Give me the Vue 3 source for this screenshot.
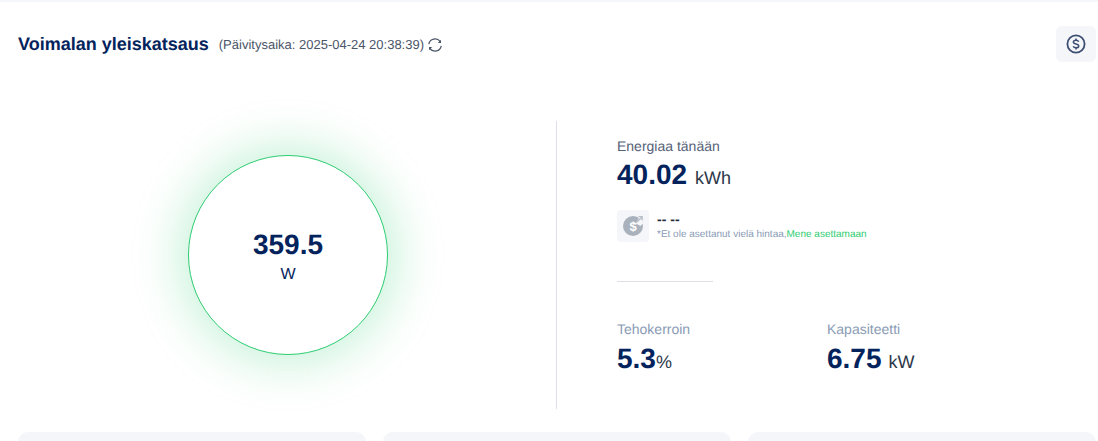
<template>
  <div class="page">
    <header class="head">
      <div class="title-wrap">
        <h1 class="title">Voimalan yleiskatsaus</h1>
        <span class="updated">(Päivitysaika: 2025-04-24 20:38:39)</span>
        <svg class="refresh" width="16" height="16" viewBox="0 0 16 16" fill="none" stroke="#4a5568" stroke-width="1.2">
          <path d="M1.800 7.200A6.300 6.300 0 0 1 13.200 4.600" />
          <path d="M14.200 8.800A6.300 6.300 0 0 1 2.800 11.400" />
          <path d="M14 2.800v3.200h-3.200z" fill="#4a5568" stroke="none" />
          <path d="M2 13.200V10h3.200z" fill="#4a5568" stroke="none" />
        </svg>
      </div>
      <button class="coin-btn" type="button" aria-label="Hinta">
        <svg width="20" height="20" viewBox="0 0 20 20" fill="none" stroke="#3d4f70" stroke-width="1.8">
          <circle cx="10" cy="10" r="8.600" />
          <path d="M12.700 7.700c-.4-1-1.400-1.500-2.700-1.500-1.500 0-2.600.7-2.600 1.900 0 1.200 1.100 1.600 2.600 1.900 1.500.3 2.700.7 2.700 1.900 0 1.200-1.200 1.900-2.700 1.900-1.300 0-2.400-.5-2.800-1.500" stroke-width="1.500" />
          <path d="M10 4.400v1.800M10 13.800v1.800" stroke-width="1.500" />
        </svg>
      </button>
    </header>

    <section class="body">
      <div class="gauge-col">
        <div class="gauge">
          <div class="gauge-value">359.5</div>
          <div class="gauge-unit">W</div>
        </div>
      </div>
      <div class="info-col">
        <div class="label">Energiaa tänään</div>
        <div class="metric"><b>40.02</b><span class="unit spaced">kWh</span></div>
        <div class="price">
          <div class="price-icon">
            <svg width="32" height="32" viewBox="0 0 32 32">
              <circle cx="16" cy="16" r="10" fill="#a9b1bd" />
              <path d="M19 13.500L23 6l4 1v5l-3.500 4z" fill="#f5f6fa" />
              <path d="M20 12l5-5M21.500 6.700h3.700v3.700" fill="none" stroke="#b9bfc9" stroke-width="1.300" />
              <text x="16" y="20.500" text-anchor="middle" class="price-glyph">$</text>
            </svg>
          </div>
          <div class="price-text">
            <div class="dashes">-- --</div>
            <div class="hint">*Et ole asettanut vielä hintaa,<a class="hint-link">Mene asettamaan</a></div>
          </div>
        </div>
        <div class="rule"></div>
        <div class="stats">
          <div class="stat">
            <div class="label muted">Tehokerroin</div>
            <div class="metric"><b>5.3</b><span class="unit">%</span></div>
          </div>
          <div class="stat">
            <div class="label muted">Kapasiteetti</div>
            <div class="metric"><b>6.75</b><span class="unit spaced-sm">kW</span></div>
          </div>
        </div>
      </div>
    </section>

    <section class="cards">
      <div class="card"></div>
      <div class="card"></div>
      <div class="card"></div>
    </section>
  </div>
</template>

<script setup>
</script>

<style>
html, body { margin: 0; background: #fff; overflow: hidden; }
</style>

<style scoped>
.page {
  width: 1098px;
  height: 441px;
  box-sizing: border-box;
  border-top: 2px solid #f5f6fa;
  padding: 24px 2px 0 18px;
  font-family: "Liberation Sans", Arial, sans-serif;
  text-rendering: geometricPrecision;
  overflow: hidden;
  background: #fff;
}
.head {
  display: flex;
  align-items: center;
  justify-content: space-between;
  height: 36px;
}
.title-wrap { display: flex; align-items: center; padding-top: 1px; }
.title {
  margin: 0;
  font-size: 18px;
  font-weight: 700;
  color: #04235c;
}
.updated {
  margin-left: 10px;
  font-size: 13px;
  color: #4a5568;
}
.refresh { margin-left: 3px; }
.coin-btn {
  width: 40px;
  height: 36px;
  border: 0;
  padding: 0;
  border-radius: 6px;
  background: #f5f6fa;
  display: flex;
  align-items: center;
  justify-content: center;
}
.body {
  display: flex;
  margin-top: 59px;
  height: 288px;
}
.gauge-col {
  width: 536px;
  flex: none;
  padding: 0 0 20px 2px;
  display: flex;
  align-items: center;
  justify-content: center;
  border-right: 1px solid #dcdfe6;
  box-sizing: content-box;
  height: 268px;
}
.gauge {
  width: 200px;
  height: 200px;
  box-sizing: border-box;
  border: 1px solid #2ecc71;
  border-radius: 50%;
  background: #fff;
  box-shadow: 0 0 50px 6px rgba(46, 204, 113, 0.3);
  display: flex;
  flex-direction: column;
  align-items: center;
  color: #04235c;
}
.gauge-value {
  margin-top: 73px;
  font-size: 28px;
  line-height: 32px;
  font-weight: 700;
}
.gauge-unit {
  margin-top: 4px;
  font-size: 16px;
  line-height: 20px;
}
.info-col {
  flex: 1;
  padding: 16px 0 0 60px;
}
.label {
  font-size: 14px;
  line-height: 18px;
  color: #556176;
}
.label.muted { color: #8a9bb5; }
.metric {
  margin-top: 3px;
  line-height: 34px;
  color: #04235c;
}
.metric b { font-size: 28px; font-weight: 700; }
.unit { font-size: 18px; color: #2d3748; }
.unit.spaced { margin-left: 8px; }
.unit.spaced-sm { margin-left: 7px; }
.price {
  display: flex;
  align-items: center;
  margin-top: 13px;
}
.price-icon {
  width: 32px;
  height: 32px;
  border-radius: 4px;
  background: #f5f6fa;
  display: flex;
  align-items: center;
  justify-content: center;
}
.price-glyph { font-size: 13px; font-weight: 700; fill: #fff; font-family: "Liberation Sans", sans-serif; }
.price-text { margin-left: 8px; }
.dashes {
  font-size: 14px;
  line-height: 16px;
  font-weight: 700;
  color: #1f2937;
}
.hint {
  font-size: 10px;
  line-height: 15px;
  color: #8a9bb5;
}
.hint-link { color: #2ecc71; }
.rule {
  width: 96px;
  height: 1px;
  margin-top: 39px;
  background: #dcdfe6;
}
.stats {
  display: flex;
  margin-top: 38px;
}
.stat { width: 210px; }
.stat .metric { margin-top: 4px; }
.cards {
  display: flex;
  gap: 17px;
  margin-top: 23px;
}
.card {
  width: 348px;
  height: 40px;
  border-radius: 10px;
  background: #f5f6fa;
}
</style>
